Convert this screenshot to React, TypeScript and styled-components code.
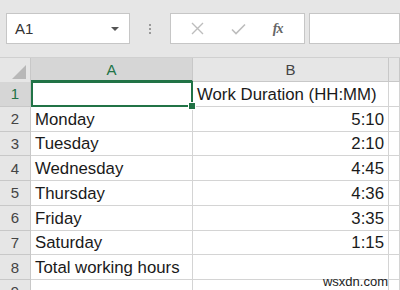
import React from 'react';
import styled, { createGlobalStyle } from 'styled-components';

const GlobalStyle = createGlobalStyle`
  html, body {
    margin: 0;
    padding: 0;
    background: #e6e6e6;
  }
`;

const Window = styled.div`
  position: relative;
  width: 400px;
  height: 290px;
  overflow: hidden;
  background: #e6e6e6;
  font-family: 'Liberation Sans', Arial, sans-serif;
`;

const FormulaBar = styled.div`
  display: flex;
  align-items: center;
  height: 31px;
  padding: 13px 0 13px 6px;
`;

const Box = styled.div<{ $width?: number }>`
  display: flex;
  align-items: center;
  box-sizing: border-box;
  height: 31px;
  width: ${(p) => (p.$width ? `${p.$width}px` : 'auto')};
  flex: ${(p) => (p.$width ? 'none' : '1')};
  background: #fff;
  border: 1px solid #c6c6c6;
`;

const NameText = styled.span`
  flex: 1;
  padding-left: 8px;
  font-size: 15px;
  color: #333;
`;

const Caret = styled.span`
  width: 0;
  height: 0;
  margin-right: 10px;
  border-left: 4px solid transparent;
  border-right: 4px solid transparent;
  border-top: 4px solid #555;
`;

const Grip = styled.div`
  display: flex;
  flex-direction: column;
  gap: 2px;
  width: 40px;
  align-items: center;

  span {
    width: 2px;
    height: 2px;
    background: #9a9a9a;
  }
`;

const FuncButtons = styled(Box)`
  justify-content: space-around;
  padding: 0 8px 0 6px;
  margin-right: 4px;
`;

const FxLabel = styled.span`
  font-family: 'Liberation Serif', 'Times New Roman', serif;
  font-style: italic;
  font-weight: bold;
  font-size: 14px;
  color: #666;
  letter-spacing: -1px;
`;

const Grid = styled.div`
  display: grid;
  grid-template-columns: 31px 162px 196px 1fr;
  grid-template-rows: 24px;
  grid-auto-rows: 24.75px;
  border-top: 1px solid #d0d0d0;
`;

const Corner = styled.div`
  position: relative;
  background: #e6e6e6;
  border-right: 1px solid #c8c8c8;

  &::after {
    content: '';
    position: absolute;
    right: 4px;
    bottom: 3px;
    width: 0;
    height: 0;
    border-left: 14px solid transparent;
    border-bottom: 14px solid #b8b8b8;
  }
`;

const ColHead = styled.div<{ $active?: boolean }>`
  display: flex;
  align-items: center;
  justify-content: center;
  box-sizing: border-box;
  background: ${(p) => (p.$active ? '#d6d6d6' : '#e6e6e6')};
  border-right: 1px solid #c8c8c8;
  border-bottom: ${(p) => (p.$active ? '2px solid #217346' : '1px solid #c8c8c8')};
  color: ${(p) => (p.$active ? '#217346' : '#444')};
  font-size: 15px;
`;

const RowHead = styled.div<{ $active?: boolean }>`
  display: flex;
  align-items: center;
  justify-content: center;
  box-sizing: border-box;
  background: ${(p) => (p.$active ? '#d6d6d6' : '#e6e6e6')};
  border-right: 1px solid #c8c8c8;
  border-bottom: 1px solid #c8c8c8;
  color: ${(p) => (p.$active ? '#217346' : '#444')};
  font-size: 15px;
`;

const Cell = styled.div<{ $num?: boolean }>`
  display: flex;
  align-items: flex-end;
  justify-content: ${(p) => (p.$num ? 'flex-end' : 'flex-start')};
  box-sizing: border-box;
  padding: 0 4px 1px 4px;
  background: #fff;
  border-right: 1px solid #d4d4d4;
  border-bottom: 1px solid #d4d4d4;
  font-size: 16.8px;
  line-height: 20px;
  color: #1a1a1a;
  white-space: nowrap;
`;

const SelectedCell = styled(Cell)`
  position: relative;
  overflow: visible;
  z-index: 1;

  &::before {
    content: '';
    position: absolute;
    left: 0;
    top: -1px;
    right: -1px;
    bottom: -1px;
    border: 2px solid #217346;
  }

  &::after {
    content: '';
    position: absolute;
    right: -4px;
    bottom: -4px;
    width: 6px;
    height: 6px;
    background: #217346;
    border: 1px solid #fff;
  }
`;

const Watermark = styled.div`
  position: absolute;
  right: 12px;
  bottom: 1px;
  font-family: 'Liberation Sans', Arial, sans-serif;
  font-size: 13px;
  color: #222;
`;

const rows: [string, string][] = [
  ['Monday', '5:10'],
  ['Tuesday', '2:10'],
  ['Wednesday', '4:45'],
  ['Thursday', '4:36'],
  ['Friday', '3:35'],
  ['Saturday', '1:15'],
  ['Total working hours', ''],
  ['', ''],
];

export default function App() {
  return (
    <Window>
      <GlobalStyle />
      <FormulaBar>
        <Box $width={124}>
          <NameText>A1</NameText>
          <Caret />
        </Box>
        <Grip>
          <span />
          <span />
          <span />
        </Grip>
        <FuncButtons $width={135}>
          <svg width="13" height="13" viewBox="0 0 13 13">
            <path d="M1 1L12 12M12 1L1 12" stroke="#bdbdbd" strokeWidth="1.4" fill="none" />
          </svg>
          <svg width="15" height="12" viewBox="0 0 15 12">
            <path d="M1 6.5L5 10.5L14 1.5" stroke="#bdbdbd" strokeWidth="1.6" fill="none" />
          </svg>
          <FxLabel>fx</FxLabel>
        </FuncButtons>
        <Box />
      </FormulaBar>
      <Grid>
        <Corner />
        <ColHead $active>A</ColHead>
        <ColHead>B</ColHead>
        <ColHead />

        <RowHead $active>1</RowHead>
        <SelectedCell />
        <Cell>Work Duration (HH:MM)</Cell>
        <Cell />

        {rows.map(([day, time], i) => (
          <React.Fragment key={i}>
            <RowHead>{i + 2}</RowHead>
            <Cell>{day}</Cell>
            <Cell $num>{time}</Cell>
            <Cell />
          </React.Fragment>
        ))}
      </Grid>
      <Watermark>wsxdn.com</Watermark>
    </Window>
  );
}
